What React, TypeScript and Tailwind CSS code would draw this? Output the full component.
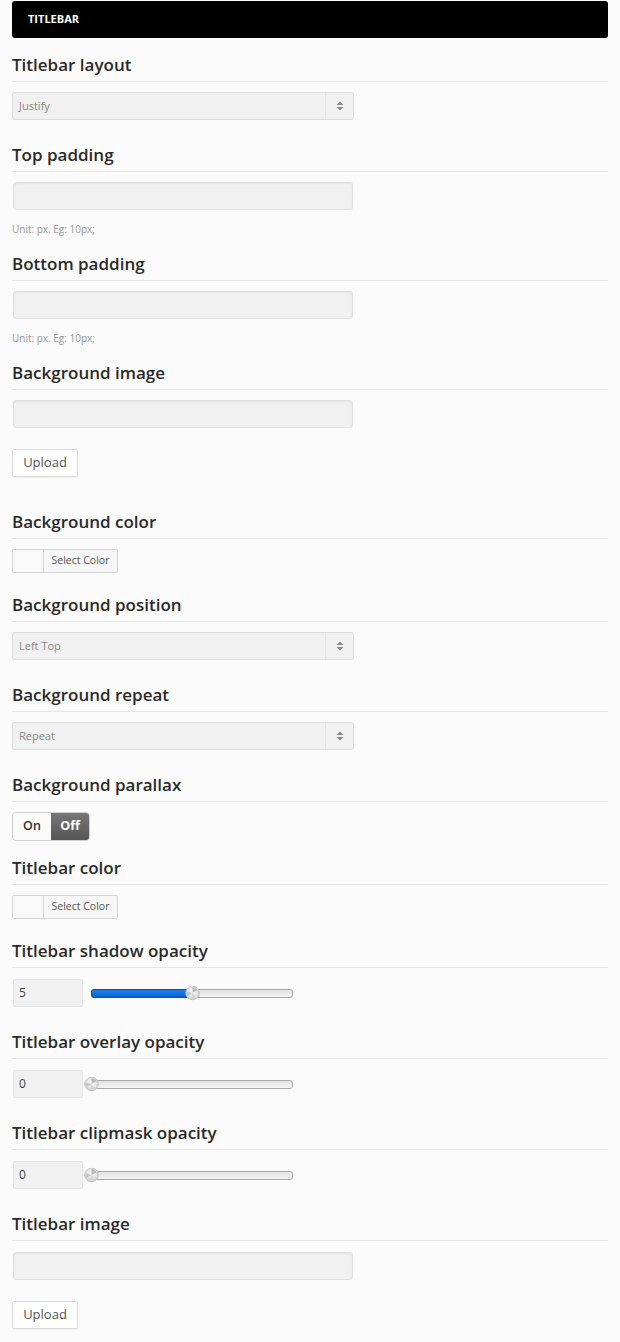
import React from "react";

const font = { fontFamily: '"Open Sans", "Noto Sans", sans-serif' };

function Heading({ children }: { children: React.ReactNode }) {
  return (
    <div className="border-b border-[#e6e6e6] pb-[4px] text-[17px] leading-[24px] font-semibold text-[#2a2a2a]">
      {children}
    </div>
  );
}

function SelectBox({ value }: { value: string }) {
  return (
    <div className="flex h-[28px] w-[342px] items-stretch rounded-[3px] border border-[#dcdcdc] bg-[#f1f1f1]">
      <div className="flex flex-1 items-center pl-[6px] text-[11px] text-[#888]">{value}</div>
      <div className="flex w-[28px] items-center justify-center border-l border-[#e2e2e2]">
        <svg width="8" height="10" viewBox="0 0 8 10">
          <path d="M4 0.5 L7.5 4 L0.5 4 Z" fill="#888" />
          <path d="M4 9.5 L7.5 6 L0.5 6 Z" fill="#888" />
        </svg>
      </div>
    </div>
  );
}

function TextBox() {
  return (
    <div className="ml-[1px] h-[28px] w-[340px] rounded-[3px] border border-[#e0e0e0] bg-[#f1f1f1] shadow-[inset_0_1px_2px_rgba(0,0,0,0.06)]" />
  );
}

function Help() {
  return <div className="mt-[12px] text-[10px] leading-[14px] text-[#999]">Unit: px. Eg: 10px;</div>;
}

function UploadBtn() {
  return (
    <div className="mt-[21px] flex h-[28px] w-[66px] items-center justify-center rounded-[2px] border border-[#dadada] bg-white text-[13px] text-[#555] shadow-[0_1px_1px_rgba(0,0,0,0.05)]">
      Upload
    </div>
  );
}

function ColorBtn() {
  return (
    <div className="flex h-[24px] w-[106px] items-stretch rounded-[2px] border border-[#d4d4d4] bg-[#f7f7f7]">
      <div className="w-[31px] border-r border-[#d4d4d4] bg-[#f9f9f9]" />
      <div className="flex flex-1 items-center justify-center text-[10.5px] text-[#555]">Select Color</div>
    </div>
  );
}

function Toggle() {
  return (
    <div className="flex h-[29px] w-[78px] overflow-hidden rounded-[4px] border border-[#cfcfcf]">
      <div className="flex w-[38px] items-center justify-center bg-[#fafafa] text-[12.5px] font-semibold text-[#333]">On</div>
      <div className="flex flex-1 items-center justify-center bg-gradient-to-b from-[#777] to-[#555] text-[12.5px] font-bold text-white">Off</div>
    </div>
  );
}

function Handle() {
  return (
    <svg width="15" height="15" viewBox="0 0 15 15">
      <defs>
        <radialGradient id="hg" cx="50%" cy="40%" r="60%">
          <stop offset="0%" stopColor="#ffffff" />
          <stop offset="100%" stopColor="#cfcfcf" />
        </radialGradient>
      </defs>
      <circle cx="7.5" cy="7.5" r="6.8" fill="url(#hg)" stroke="#bdbdbd" strokeWidth="0.8" />
      <path d="M7.5 7.5 L7.5 1.5 A6 6 0 0 1 12.5 4.5 Z" fill="#b8b8b8" />
      <path d="M7.5 7.5 L2.5 10.5 A6 6 0 0 1 1.6 6 Z" fill="#c4c4c4" />
      <path d="M7.5 7.5 L10.5 12.8 A6 6 0 0 1 6 13.4 Z" fill="#d2d2d2" />
    </svg>
  );
}

function SliderRow({ value, pct }: { value: string; pct: number }) {
  const w = 201;
  const pos = (w * pct) / 100;
  return (
    <div className="flex items-center">
      <div className="ml-[1px] flex h-[28px] w-[70px] items-center rounded-[2px] border border-[#e4e4e4] bg-[#f1f1f1] pl-[5px] text-[12px] text-[#444]">
        {value}
      </div>
      <div className="relative ml-[8px] h-[9px] w-[202px]">
        <div className="absolute inset-0 rounded-[3px] border border-[#a8a8a8] bg-gradient-to-b from-[#e2e2e2] to-[#f4f4f4]" />
        {pct > 0 && (
          <div
            className="absolute top-0 left-0 h-[9px] rounded-l-[3px] border border-[#0b4fa8] bg-gradient-to-b from-[#1f7fe8] to-[#0a62d0]"
            style={{ width: pos }}
          />
        )}
        <div className="absolute top-1/2 h-[15px] w-[15px] -translate-y-1/2" style={{ left: pos - 7 }}>
          <Handle />
        </div>
      </div>
    </div>
  );
}

export default function App() {
  return (
    <div className="min-h-[1342px] w-[620px] bg-[#fbfbfb] px-[12px] pt-[1px]" style={font}>
      <div className="flex h-[37px] items-center rounded-[3px] bg-black pl-[16px] text-[11px] font-bold text-white">
        TITLEBAR
      </div>

      <div className="mt-[15px]">
        <Heading>Titlebar layout</Heading>
        <div className="mt-[10px]"><SelectBox value="Justify" /></div>
      </div>

      <div className="mt-[23px]">
        <Heading>Top padding</Heading>
        <div className="mt-[10px]"><TextBox /></div>
        <Help />
      </div>

      <div className="mt-[16px]">
        <Heading>Bottom padding</Heading>
        <div className="mt-[10px]"><TextBox /></div>
        <Help />
      </div>

      <div className="mt-[16px]">
        <Heading>Background image</Heading>
        <div className="mt-[10px]"><TextBox /></div>
        <UploadBtn />
      </div>

      <div className="mt-[33px]">
        <Heading>Background color</Heading>
        <div className="mt-[10px]"><ColorBtn /></div>
      </div>

      <div className="mt-[20px]">
        <Heading>Background position</Heading>
        <div className="mt-[10px]"><SelectBox value="Left Top" /></div>
      </div>

      <div className="mt-[23px]">
        <Heading>Background repeat</Heading>
        <div className="mt-[10px]"><SelectBox value="Repeat" /></div>
      </div>

      <div className="mt-[23px]">
        <Heading>Background parallax</Heading>
        <div className="mt-[10px]"><Toggle /></div>
      </div>

      <div className="mt-[15px]">
        <Heading>Titlebar color</Heading>
        <div className="mt-[10px]"><ColorBtn /></div>
      </div>

      <div className="mt-[20px]">
        <Heading>Titlebar shadow opacity</Heading>
        <div className="mt-[11px]"><SliderRow value="5" pct={50} /></div>
      </div>

      <div className="mt-[23px]">
        <Heading>Titlebar overlay opacity</Heading>
        <div className="mt-[11px]"><SliderRow value="0" pct={0} /></div>
      </div>

      <div className="mt-[23px]">
        <Heading>Titlebar clipmask opacity</Heading>
        <div className="mt-[11px]"><SliderRow value="0" pct={0} /></div>
      </div>

      <div className="mt-[23px]">
        <Heading>Titlebar image</Heading>
        <div className="mt-[11px]"><TextBox /></div>
        <UploadBtn />
      </div>
    </div>
  );
}
